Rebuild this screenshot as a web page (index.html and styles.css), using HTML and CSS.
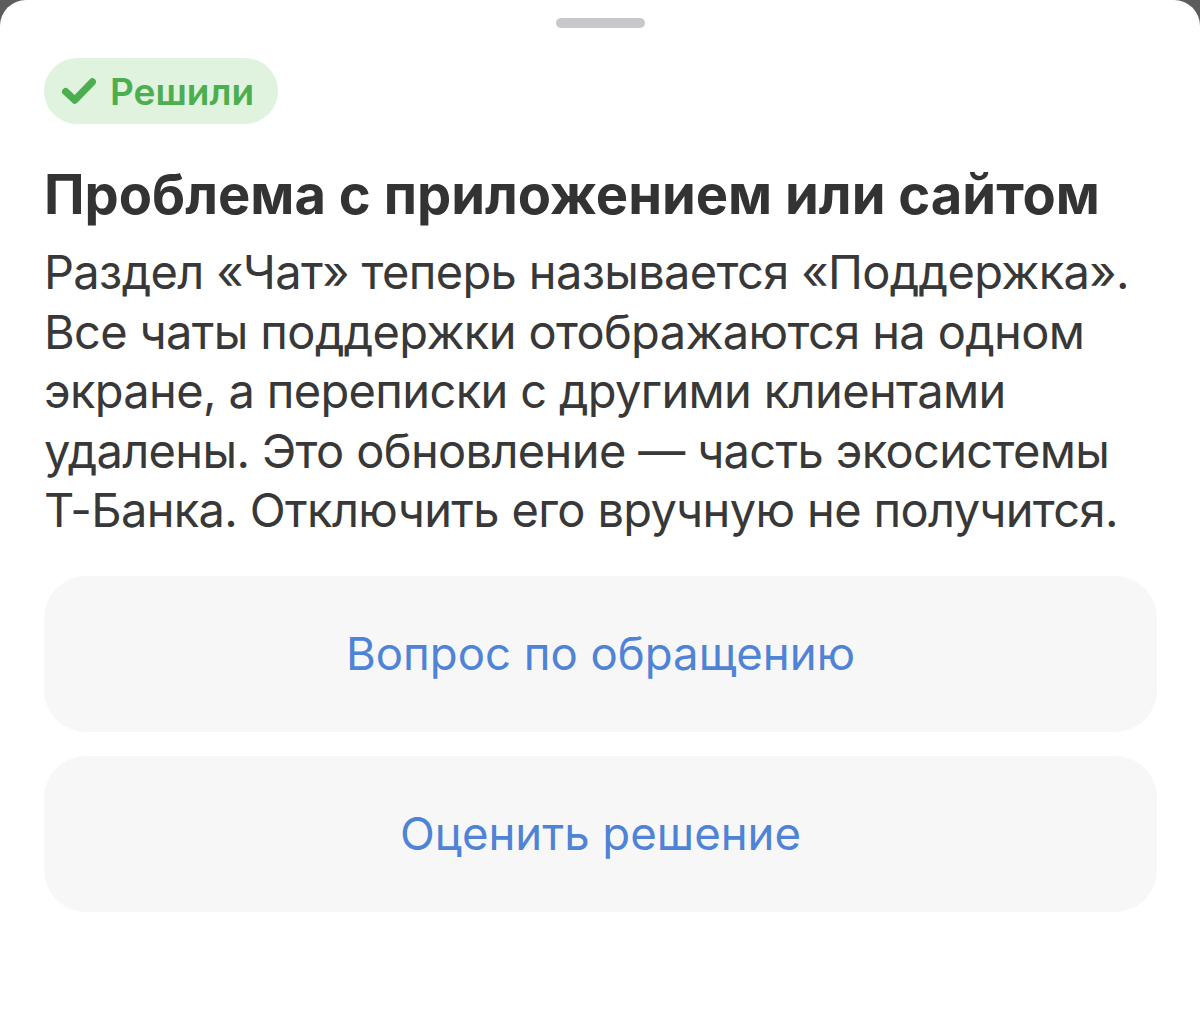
FILE: index.html
```html
<!DOCTYPE html>
<html lang="ru">
<head>
<meta charset="utf-8">
<link rel="stylesheet" href="styles.css">
</head>
<body>
<div class="sheet">
  <div class="grabber"></div>
  <div class="badge">
    <svg class="check" viewBox="0 0 24 20" width="34" height="28"><path d="M2.5 10.5 L9 16.5 L21.5 3.5" fill="none" stroke="#4cae4f" stroke-width="5.2" stroke-linecap="round" stroke-linejoin="round"/></svg>
    <span>Решили</span>
  </div>
  <h1 class="title">Проблема с приложением или сайтом</h1>
  <p class="text">Раздел «Чат» теперь называется «Поддержка». Все чаты поддержки отображаются на одном экране, а переписки с другими клиентами удалены. Это обновление — часть экосистемы Т-Банка. Отключить его вручную не получится.</p>
  <div class="actions">
    <div class="btn">Вопрос по обращению</div>
    <div class="btn">Оценить решение</div>
  </div>
</div>
</body>
</html>
```
FILE: styles.css
```css
html, body {
  margin: 0;
  padding: 0;
  height: 100%;
}
body {
  background: #5c5c5c;
  font-family: Inter, "Noto Sans", sans-serif;
}
.sheet {
  background: #ffffff;
  min-height: 100%;
  box-sizing: border-box;
  border-radius: 26px 26px 0 0;
  padding: 18px 44px 0 44px;
  display: flex;
  flex-direction: column;
}
.grabber {
  align-self: center;
  width: 89px;
  height: 10px;
  border-radius: 5px;
  background: #c8c8ca;
}
.badge {
  align-self: flex-start;
  margin-top: 30px;
  height: 66px;
  box-sizing: border-box;
  padding: 0 24px 0 18px;
  border-radius: 33px;
  background: #dff3df;
  display: flex;
  align-items: center;
  gap: 14px;
  color: #4cae4f;
  font-size: 37px;
  font-weight: 600;
}
.check {
  display: block;
}
.title {
  margin: 38px 0 0 0;
  font-size: 54.3px;
  font-weight: 700;
  color: #333333;
  line-height: 64px;
}
.text {
  margin: 16px 0 0 0;
  font-size: 47px;
  letter-spacing: -0.65px;
  line-height: 59.5px;
  color: #383838;
  font-weight: 400;
}
.actions {
  margin-top: 36px;
  display: flex;
  flex-direction: column;
  gap: 24px;
  margin-right: -1px;
}
.btn {
  height: 156px;
  border-radius: 42px;
  background: #f7f7f8;
  display: flex;
  align-items: center;
  justify-content: center;
  color: #4f83d6;
  font-size: 45.5px;
  font-weight: 400;
}
```
